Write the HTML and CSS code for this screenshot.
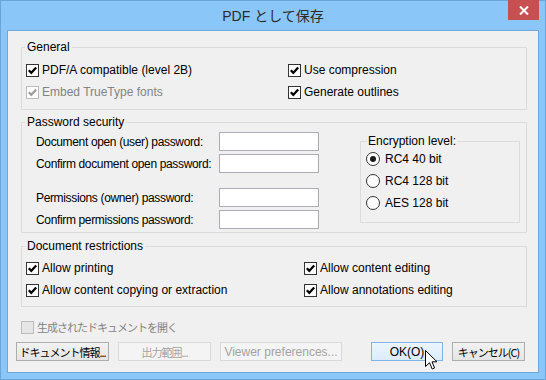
FILE: index.html
```html
<!DOCTYPE html>
<html lang="ja">
<head>
    <meta charset="UTF-8">
    <title>PDF として保存</title>
    <link rel="stylesheet" href="styles.css">
</head>
<body>
    <div class="window">
        <div class="titlebar">
            <span></span>
            <h1 class="title">PDF として保存</h1>
            <button class="close" aria-label="close">
                <svg width="10" height="9" viewBox="0 0 10 9"><path d="M1 0.5 L9 8.5 M9 0.5 L1 8.5" stroke="#fff" stroke-width="2"/></svg>
            </button>
        </div>

        <div class="client">
            <fieldset class="group general">
                <legend>General</legend>
                <div class="cols">
                    <div class="col col-general">
                        <label class="check"><span class="box"><svg viewBox="0 0 11 11"><path d="M1.8 5.2 L4.3 7.8 L9.2 2.4"/></svg></span>PDF/A compatible (level 2B)</label>
                        <label class="check disabled"><span class="box"><svg viewBox="0 0 11 11"><path d="M1.8 5.2 L4.3 7.8 L9.2 2.4"/></svg></span>Embed TrueType fonts</label>
                    </div>
                    <div class="col">
                        <label class="check"><span class="box"><svg viewBox="0 0 11 11"><path d="M1.8 5.2 L4.3 7.8 L9.2 2.4"/></svg></span>Use compression</label>
                        <label class="check"><span class="box"><svg viewBox="0 0 11 11"><path d="M1.8 5.2 L4.3 7.8 L9.2 2.4"/></svg></span>Generate outlines</label>
                    </div>
                </div>
            </fieldset>

            <fieldset class="group password">
                <legend>Password security</legend>
                <div class="pw-body">
                    <div class="pw-fields">
                        <div class="pw-pair">
                            <label class="pw-label">Document open (user) password:</label>
                            <input class="edit" type="password">
                            <label class="pw-label">Confirm document open password:</label>
                            <input class="edit" type="password">
                        </div>
                        <div class="pw-pair">
                            <label class="pw-label">Permissions (owner) password:</label>
                            <input class="edit" type="password">
                            <label class="pw-label">Confirm permissions password:</label>
                            <input class="edit" type="password">
                        </div>
                    </div>
                    <fieldset class="group encryption">
                        <legend>Encryption level:</legend>
                        <div class="radios">
                            <label class="radio"><span class="dot on"></span>RC4 40 bit</label>
                            <label class="radio"><span class="dot"></span>RC4 128 bit</label>
                            <label class="radio"><span class="dot"></span>AES 128 bit</label>
                        </div>
                    </fieldset>
                </div>
            </fieldset>

            <fieldset class="group restrictions">
                <legend>Document restrictions</legend>
                <div class="cols">
                    <div class="col col-restrict">
                        <label class="check"><span class="box"><svg viewBox="0 0 11 11"><path d="M1.8 5.2 L4.3 7.8 L9.2 2.4"/></svg></span>Allow printing</label>
                        <label class="check"><span class="box"><svg viewBox="0 0 11 11"><path d="M1.8 5.2 L4.3 7.8 L9.2 2.4"/></svg></span>Allow content copying or extraction</label>
                    </div>
                    <div class="col">
                        <label class="check"><span class="box"><svg viewBox="0 0 11 11"><path d="M1.8 5.2 L4.3 7.8 L9.2 2.4"/></svg></span>Allow content editing</label>
                        <label class="check"><span class="box"><svg viewBox="0 0 11 11"><path d="M1.8 5.2 L4.3 7.8 L9.2 2.4"/></svg></span>Allow annotations editing</label>
                    </div>
                </div>
            </fieldset>

            <label class="check disabled open-doc"><span class="box empty"></span><span class="jp">生成されたドキュメントを開く</span></label>

            <div class="buttons">
                <div class="btn-left">
                    <button class="btn jp w93">ドキュメント情報...</button>
                    <button class="btn jp w93" disabled>出力範囲...</button>
                    <button class="btn w122" disabled>Viewer preferences...</button>
                </div>
                <div class="btn-right">
                    <button class="btn default w72">OK(O)</button>
                    <button class="btn jp w73">キャンセル(C)</button>
                </div>
            </div>
        </div>

        <svg class="cursor" width="13" height="21" viewBox="0 0 13 21">
            <path d="M0.5 0.5 L0.5 16.5 L4.5 12.7 L7.2 19 L9.6 18 L7 11.8 L12 11.8 Z" fill="#fff" stroke="#000" stroke-width="1" stroke-linejoin="miter"/>
        </svg>
    </div>
</body>
</html>
```

FILE: styles.css
```css
body {
    margin: 0;
    font-family: "Liberation Sans", "Noto Sans CJK JP", sans-serif;
    font-size: 12px;
    color: #000;
    background: #fff;
}
.window {
    position: relative;
    width: 546px;
    height: 380px;
    box-sizing: border-box;
    background: #8bc6f8;
    border: 1px solid #6aa5da;
    display: flex;
    flex-direction: column;
}
.titlebar {
    height: 29px;
    display: grid;
    grid-template-columns: 1fr auto 1fr;
    align-items: start;
}
.title {
    margin: 0;
    padding-top: 5px;
    font-family: "Liberation Sans", "Noto Sans CJK JP", sans-serif;
    font-weight: normal;
    font-size: 14px;
    line-height: 20px;
    color: #2b2b2b;
    white-space: nowrap;
}
.close {
    justify-self: end;
    width: 31px;
    height: 20px;
    margin: -1px 6px 0 0;
    padding: 0;
    border: none;
    background: #c75050;
    display: flex;
    align-items: center;
    justify-content: center;
}
.client {
    flex: 1;
    margin: 0 6px 6px;
    background: #f0f0f0;
    border: 1px solid #6ea8db;
    padding-top: 9px;
}

/* group boxes */
.group {
    margin: 0;
    padding: 0;
    border: 1px solid #dcdcdc;
    min-width: 0;
}
.group legend {
    margin-left: 3px;
    padding: 0 2px;
    line-height: 14px;
    font-size: 12px;
}
.general,
.password,
.restrictions {
    margin: 0 11px 0 13px;
}
.password {
    margin-top: 5px;
}
.restrictions {
    margin-top: 6px;
}
.general .cols {
    padding: 5px 0 6px 4px;
}
.restrictions .cols {
    padding: 4px 0 5px 4px;
}
.cols {
    display: flex;
}
.col-general {
    width: 262px;
}
.col-restrict {
    width: 278px;
}

/* checkbox */
.check {
    display: flex;
    align-items: center;
    height: 22px;
    white-space: nowrap;
}
.box {
    width: 11px;
    height: 11px;
    border: 1px solid #333;
    background: #fff;
    margin-right: 3px;
    flex: none;
}
.box svg {
    display: block;
    width: 11px;
    height: 11px;
    fill: none;
    stroke: #000;
    stroke-width: 2.2;
}
.check.disabled {
    color: #838383;
}
.check.disabled .box {
    border-color: #bcbcbc;
}
.check.disabled .box svg {
    stroke: #9d9d9d;
}
.box.empty {
    background: #e6e6e6;
}

/* passwords */
.pw-body {
    display: flex;
    align-items: flex-start;
    padding: 3px 0 3px 14px;
}
.pw-pair {
    display: grid;
    grid-template-columns: 183px 100px;
    row-gap: 3px;
    align-items: center;
}
.pw-pair + .pw-pair {
    margin-top: 15px;
}
.pw-label {
    white-space: nowrap;
    letter-spacing: -0.35px;
}
.edit {
    box-sizing: border-box;
    width: 100px;
    height: 19px;
    margin: 0;
    border: 1px solid #abadb3;
    background: #fff;
}
.encryption {
    width: 160px;
    box-sizing: border-box;
    margin: 2px 0 0 41px;
}
.encryption legend {
    margin-left: 6px;
    padding: 0 1px;
}
.radios {
    padding: 0 0 8px 5px;
}
.radio {
    display: flex;
    align-items: center;
    height: 22px;
}
.dot {
    width: 12px;
    height: 12px;
    border: 1px solid #333;
    border-radius: 50%;
    background: #fff;
    margin-right: 5px;
    display: flex;
    align-items: center;
    justify-content: center;
    flex: none;
}
.dot.on::after {
    content: "";
    width: 6px;
    height: 6px;
    border-radius: 50%;
    background: #1a1a1a;
}

/* bottom */
.jp {
    font-family: "Noto Sans CJK JP", "Liberation Sans", sans-serif;
    font-size: 11px;
    letter-spacing: -1px;
}
.open-doc {
    margin: 9px 0 0 13px;
}
.buttons {
    display: flex;
    justify-content: space-between;
    margin: 4px 13px 0 8px;
}
.btn-left,
.btn-right {
    display: flex;
    gap: 9px;
}
.btn {
    height: 19px;
    padding: 0;
    border: 1px solid #adadad;
    background: linear-gradient(to bottom, #f2f2f2, #e5e5e5);
    font-family: "Liberation Sans", "Noto Sans CJK JP", sans-serif;
    font-size: 12px;
    color: #000;
    white-space: nowrap;
}
.btn.jp {
    font-family: "Noto Sans CJK JP", "Liberation Sans", sans-serif;
    font-size: 11px;
}
.btn:disabled {
    border-color: #d9d9d9;
    background: #f4f4f4;
    color: #a3a3a3;
}
.btn.default {
    border-color: #7eb4ea;
    background: linear-gradient(to bottom, #ecf4fc, #dcecfc);
}
.w93 { width: 93px; }
.w122 { width: 122px; }
.w72 { width: 72px; }
.w73 { width: 73px; }

.cursor {
    position: absolute;
    left: 424px;
    top: 349px;
}
```
